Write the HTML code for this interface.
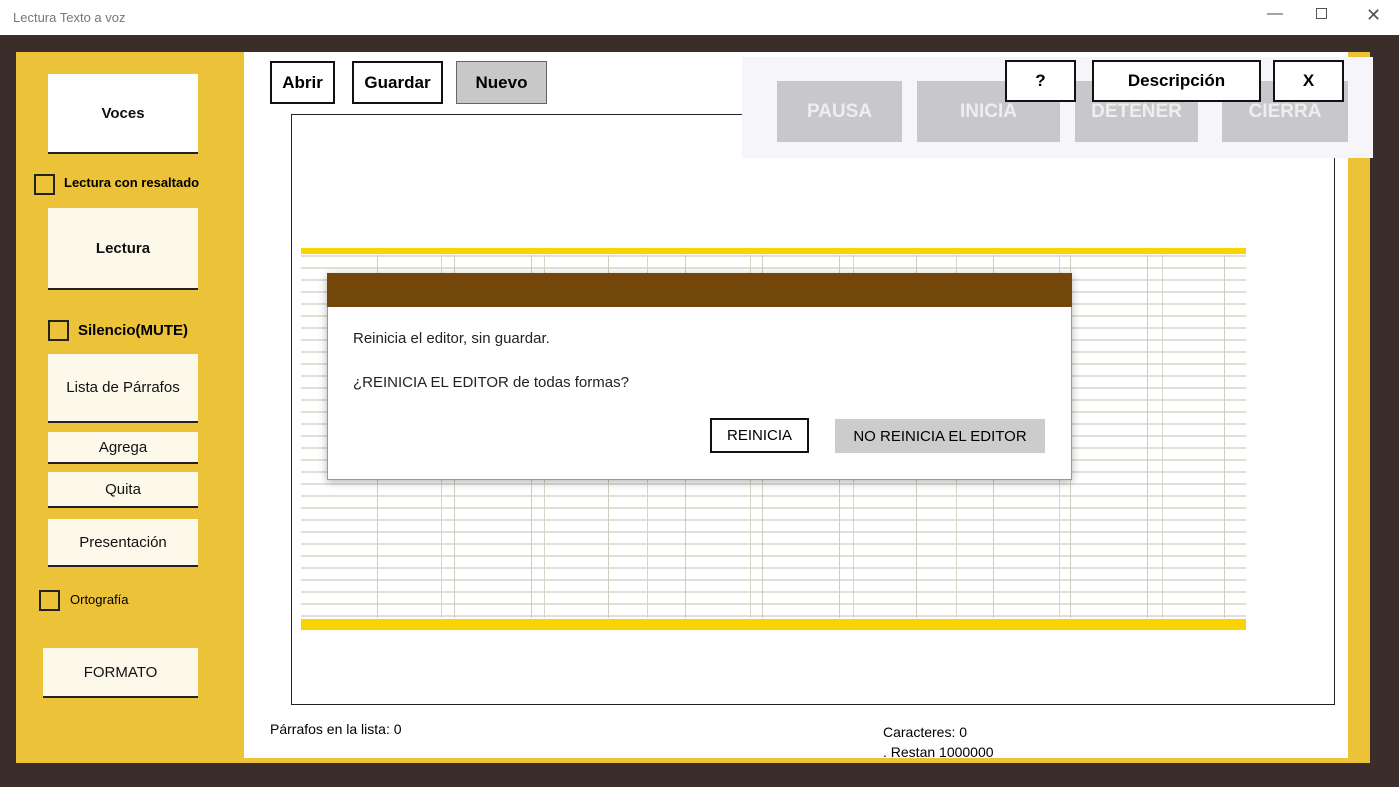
<!DOCTYPE html>
<html><head><meta charset="utf-8"><style>
*{margin:0;padding:0;box-sizing:border-box}
body{width:1399px;height:787px;position:relative;background:#3b2e2a;font-family:"Liberation Sans",sans-serif;overflow:hidden}
.a{position:absolute}
.tb{left:0;top:0;width:1399px;height:35px;background:#fff;font-size:13px;color:#777}
.btnw{background:#fcf8ea;border-bottom:2px solid #222;display:flex;align-items:center;justify-content:center;font-size:15px;color:#111}
.cb{border:2px solid #222;width:21px;height:21px}
.tbtn{border:2px solid #111;background:#fff;font-weight:bold;font-size:17px;display:flex;align-items:center;justify-content:center}
.gb{background:#c8c7cc;color:#eee;font-weight:bold;font-size:19px;display:flex;align-items:center;justify-content:center}
</style></head><body>
<div class="a tb"><span class="a" style="left:13px;top:10px">Lectura Texto a voz</span>
<span class="a" style="left:1267px;top:5px;font-size:16px;color:#555">—</span>
<span class="a" style="left:1316px;top:8px;width:11px;height:11px;border:1px solid #555"></span>
<span class="a" style="left:1366px;top:5px;font-size:18px;color:#555">✕</span></div>
<div class="a" style="left:16px;top:52px;width:1354px;height:711px;background:#ecc238"></div>
<div class="a" style="left:244px;top:52px;width:1104px;height:706px;background:#fff"></div>
<div class="a btnw" style="left:48px;top:74px;width:150px;height:80px;background:#fff;font-weight:bold">Voces</div>
<div class="a cb" style="left:34px;top:174px"></div><div class="a" style="left:64px;top:175px;font-size:13px;font-weight:bold">Lectura con resaltado</div>
<div class="a btnw" style="left:48px;top:208px;width:150px;height:82px;font-weight:bold">Lectura</div>
<div class="a cb" style="left:48px;top:320px"></div><div class="a" style="left:78px;top:322px;font-size:15px;font-weight:bold">Silencio(MUTE)</div>
<div class="a btnw" style="left:48px;top:354px;width:150px;height:69px">Lista de Párrafos</div>
<div class="a btnw" style="left:48px;top:432px;width:150px;height:32px">Agrega</div>
<div class="a btnw" style="left:48px;top:472px;width:150px;height:36px">Quita</div>
<div class="a btnw" style="left:48px;top:519px;width:150px;height:48px">Presentación</div>
<div class="a cb" style="left:39px;top:590px"></div><div class="a" style="left:70px;top:592px;font-size:13px">Ortografía</div>
<div class="a btnw" style="left:43px;top:648px;width:155px;height:50px">FORMATO</div>
<div class="a tbtn" style="left:270px;top:61px;width:65px;height:43px">Abrir</div>
<div class="a tbtn" style="left:352px;top:61px;width:91px;height:43px">Guardar</div>
<div class="a tbtn" style="left:456px;top:61px;width:91px;height:43px;background:#c8c8c8;border:1px solid #666">Nuevo</div>
<div class="a" style="left:291px;top:114px;width:1044px;height:591px;border:1px solid #222"></div>
<div class="a" style="left:301px;top:248px;width:945px;height:6px;background:#fbd300"></div>
<div class="a" style="left:301px;top:255px;width:945px;height:363px;background:repeating-linear-gradient(to bottom,#e2e0d6 0 2px,#fff 2px 12px),#fff"></div>
<div class="a" style="left:301px;top:255px;width:945px;height:363px;background:repeating-linear-gradient(to right,transparent 0 76px,#d0ccbe 76px 77px)"></div>
<div class="a" style="left:339px;top:255px;width:907px;height:363px;background:repeating-linear-gradient(to right,transparent 0 102px,#d8d5c8 102px 103px)"></div>
<div class="a" style="left:301px;top:619px;width:945px;height:11px;background:#fbd300"></div>
<div class="a" style="left:742px;top:57px;width:631px;height:101px;background:#f5f5fa"></div>
<div class="a gb" style="left:777px;top:81px;width:125px;height:61px">PAUSA</div>
<div class="a gb" style="left:917px;top:81px;width:143px;height:61px">INICIA</div>
<div class="a gb" style="left:1075px;top:81px;width:123px;height:61px">DETENER</div>
<div class="a gb" style="left:1222px;top:81px;width:126px;height:61px">CIERRA</div>
<div class="a tbtn" style="left:1005px;top:60px;width:71px;height:42px">?</div>
<div class="a tbtn" style="left:1092px;top:60px;width:169px;height:42px">Descripción</div>
<div class="a tbtn" style="left:1273px;top:60px;width:71px;height:42px">X</div>
<div class="a" style="left:327px;top:273px;width:745px;height:207px;background:#fff;border:1px solid #999;box-shadow:0 2px 8px rgba(0,0,0,.3)"></div>
<div class="a" style="left:327px;top:273px;width:745px;height:34px;background:#73470a"></div>
<div class="a" style="left:353px;top:330px;font-size:15px;color:#222">Reinicia el editor, sin guardar.</div>
<div class="a" style="left:353px;top:374px;font-size:15px;color:#222">¿REINICIA EL EDITOR de todas formas?</div>
<div class="a tbtn" style="left:710px;top:418px;width:99px;height:35px;font-weight:normal;font-size:15px">REINICIA</div>
<div class="a" style="left:835px;top:419px;width:210px;height:34px;background:#ccc;font-size:15px;display:flex;align-items:center;justify-content:center">NO REINICIA EL EDITOR</div>
<div class="a" style="left:270px;top:721px;font-size:14px">Párrafos en la lista: 0</div>
<div class="a" style="left:883px;top:722px;font-size:14px;line-height:20px">Caracteres: 0<br>. Restan 1000000</div>
</body></html>
